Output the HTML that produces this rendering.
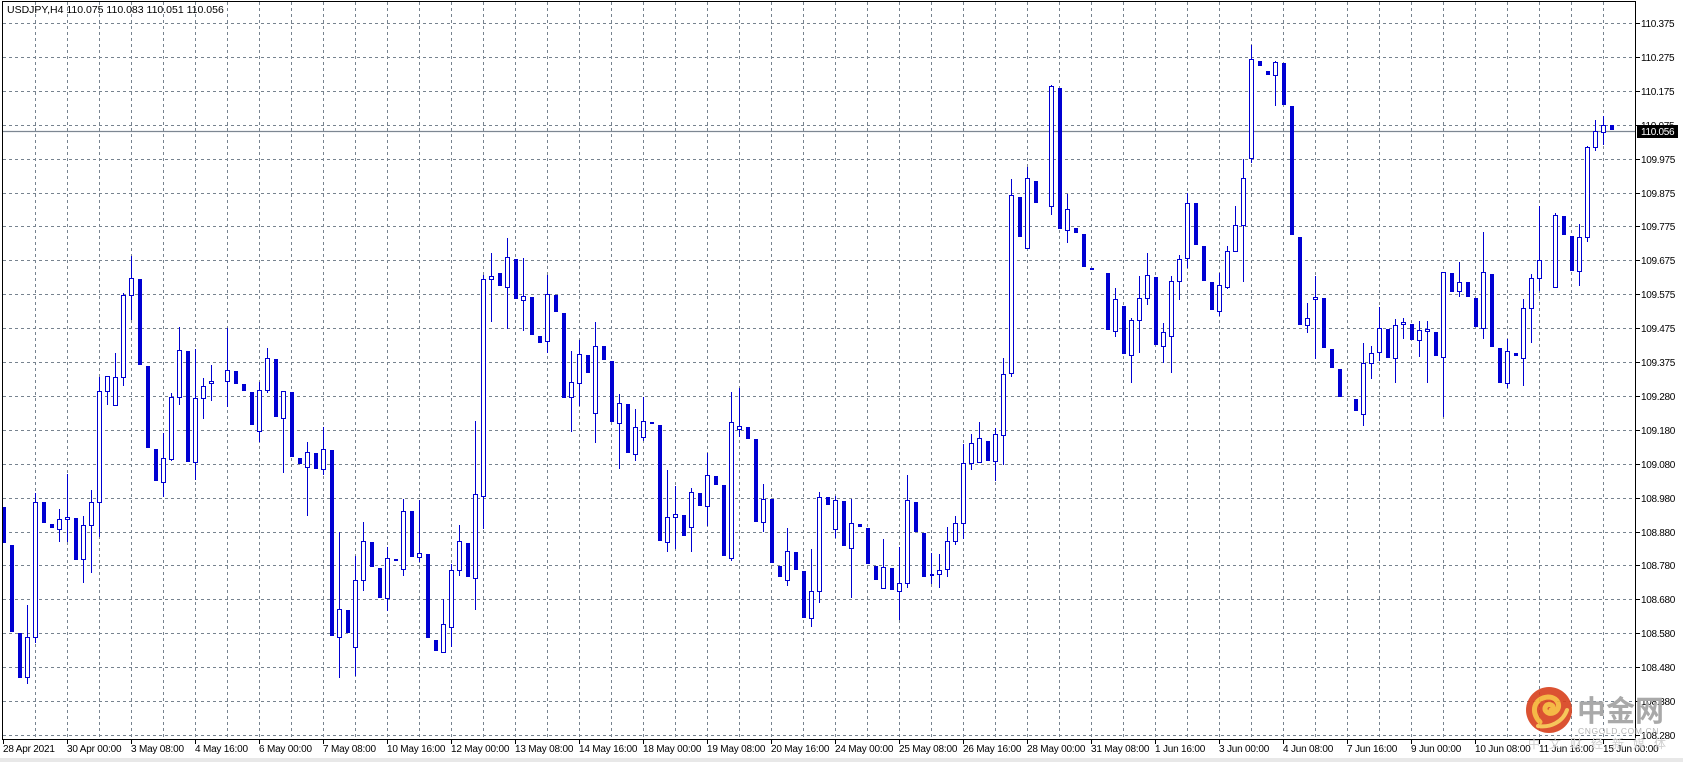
<!DOCTYPE html>
<html><head><meta charset="utf-8"><style>
html,body{margin:0;padding:0;background:#fff;width:1683px;height:762px;overflow:hidden}
svg{display:block}
text{font-family:"Liberation Sans","Noto Sans CJK SC",sans-serif}
</style></head><body>
<svg id="s" width="1683" height="762" viewBox="0 0 1683 762" xmlns="http://www.w3.org/2000/svg">
<rect width="1683" height="762" fill="#fff"/>
<g id="grid" stroke="#77838f" stroke-width="1" stroke-dasharray="3,3" fill="none"></g>
<line x1="2" y1="131.5" x2="1636" y2="131.5" stroke="#7d8792" stroke-width="1.2"/>
<g id="candles"></g>
<!-- frame -->
<line x1="2.5" y1="1" x2="2.5" y2="740" stroke="#000" stroke-width="1"/>
<line x1="2" y1="1.5" x2="1636" y2="1.5" stroke="#000" stroke-width="1"/>
<line x1="1635.5" y1="1" x2="1635.5" y2="740" stroke="#000" stroke-width="1"/>
<line x1="2" y1="739.5" x2="1636" y2="739.5" stroke="#000" stroke-width="1"/>
<g id="ticks" stroke="#000" stroke-width="1"></g>
<rect x="0" y="758" width="1683" height="4" fill="#e8e8e8"/>
<text x="7" y="13" font-size="10.5" fill="#000">USDJPY,H4  110.075 110.083 110.051 110.056</text>
<g font-size="10" fill="#000" letter-spacing="-0.3">
<text x="1641" y="27">110.375</text>
<text x="1641" y="61">110.275</text>
<text x="1641" y="95">110.175</text>
<text x="1641" y="129">110.075</text>
<text x="1641" y="163">109.975</text>
<text x="1641" y="197">109.875</text>
<text x="1641" y="230">109.775</text>
<text x="1641" y="264">109.675</text>
<text x="1641" y="298">109.575</text>
<text x="1641" y="332">109.475</text>
<text x="1641" y="366">109.375</text>
<text x="1641" y="400">109.280</text>
<text x="1641" y="434">109.180</text>
<text x="1641" y="468">109.080</text>
<text x="1641" y="502">108.980</text>
<text x="1641" y="536">108.880</text>
<text x="1641" y="569">108.780</text>
<text x="1641" y="603">108.680</text>
<text x="1641" y="637">108.580</text>
<text x="1641" y="671">108.480</text>
<text x="1641" y="705">108.380</text>
<text x="1641" y="739">108.280</text>
</g>
<rect x="1637" y="125" width="41" height="13" fill="#000"/>
<text x="1641" y="135" font-size="10" fill="#fff" letter-spacing="-0.3">110.056</text>
<g font-size="10" fill="#000" letter-spacing="-0.2">
<text x="3" y="752">28 Apr 2021</text>
<text x="67" y="752">30 Apr 00:00</text>
<text x="131" y="752">3 May 08:00</text>
<text x="195" y="752">4 May 16:00</text>
<text x="259" y="752">6 May 00:00</text>
<text x="323" y="752">7 May 08:00</text>
<text x="387" y="752">10 May 16:00</text>
<text x="451" y="752">12 May 00:00</text>
<text x="515" y="752">13 May 08:00</text>
<text x="579" y="752">14 May 16:00</text>
<text x="643" y="752">18 May 00:00</text>
<text x="707" y="752">19 May 08:00</text>
<text x="771" y="752">20 May 16:00</text>
<text x="835" y="752">24 May 00:00</text>
<text x="899" y="752">25 May 08:00</text>
<text x="963" y="752">26 May 16:00</text>
<text x="1027" y="752">28 May 00:00</text>
<text x="1091" y="752">31 May 08:00</text>
<text x="1155" y="752">1 Jun 16:00</text>
<text x="1219" y="752">3 Jun 00:00</text>
<text x="1283" y="752">4 Jun 08:00</text>
<text x="1347" y="752">7 Jun 16:00</text>
<text x="1411" y="752">9 Jun 00:00</text>
<text x="1475" y="752">10 Jun 08:00</text>
<text x="1539" y="752">11 Jun 16:00</text>
<text x="1603" y="752">15 Jun 00:00</text>
</g>
<!-- watermark -->
<g opacity="0.9">
<circle cx="1549" cy="710" r="23" fill="#d8401c"/>
<path d="M1540 722 C1530 712,1534 698,1548 697 C1560 697,1562 710,1553 713 C1547 715,1542 709,1547 705 C1552 703,1556 708,1551 710" fill="none" stroke="#f5b233" stroke-width="5" stroke-linecap="round"/>
<path d="M1538 726 C1550 728,1563 722,1567 710" fill="none" stroke="#f6c04a" stroke-width="4" stroke-linecap="round"/>
</g>
<text x="1577" y="721" font-size="29" font-weight="bold" fill="#a9a9a9" font-family="'Noto Sans CJK SC',sans-serif">中金网</text>
<text x="1578" y="734" font-size="8.5" fill="#b5b5b5" letter-spacing="0.6">CNGOLD.COM.CN</text>
<text x="1528" y="748" font-size="12" fill="#cfcfcf" letter-spacing="9" font-family="'Noto Sans CJK SC',sans-serif">中文财经新媒体</text>
</svg>
<script>
(function(){
var NS="http://www.w3.org/2000/svg";
var g=document.getElementById("grid");
function ln(p,x1,y1,x2,y2){var l=document.createElementNS(NS,"line");l.setAttribute("x1",x1);l.setAttribute("y1",y1);l.setAttribute("x2",x2);l.setAttribute("y2",y2);p.appendChild(l);return l;}
for(var k=0;k<22;k++){var y=Math.round(23+k*33.9)+0.5;ln(g,3,y,1635,y);}
for(var x=35;x<1635;x+=32){ln(g,x+0.5,2,x+0.5,739);}
var t=document.getElementById("ticks");
for(var k=0;k<22;k++){var y=Math.round(23+k*33.9)+0.5;ln(t,1636,y,1640,y);}
for(var x=3;x<=1603;x+=64){ln(t,x+0.5,740,x+0.5,744);}
var D=[[507,543],[545,632],[633,678],[677,637,605,684],[637,502,493,643],[502,523],[524,528],[529,519,509,542],[519,517,474,542],[518,560],
[559,525,516,583],[525,502,490,573],[502,391,377,537],[391,376,376,405],[405,377,353,405],[377,295,293,386],[295,278,256,320],[279,365],[366,448],[449,481],
[482,458,433,497],[459,397,393,461],[397,350,327,405],[351,462],[462,398,349,480],[398,386,378,419],[383,381,365,401],null,[381,370,328,407],[371,384],
[384,391],[392,425],[431,390,382,442],[390,358,348,393],[359,417],[418,391,391,473],[392,457],[458,464],[467,452,442,516],[453,469],
[469,449,427,475],[450,636],[637,609,532,678],[610,633],[647,580,556,676],[580,541,522,591],[542,567],[568,598],[598,558,547,611],[559,561],
[569,511,499,576],[511,557],[557,553,500,562],[554,638],[640,651],[652,624,599,653],[627,570,564,647],[570,541,525,576],[543,577],[578,494,421,610],
[496,279,275,529],[279,276,253,322],[273,286],[287,257,238,329],[259,299],[300,296,258,331],[297,335],[336,343],[341,294,275,353],[295,312],
[313,398],[397,382,351,432],[383,354,340,406],[355,373],[413,346,322,443],[346,360],[361,422],[423,403,394,469],[404,453],[454,427,409,461],
[437,421,397,441],[422,424],[425,541],[542,517,470,552],[517,514,486,549],[515,536],[527,492,488,552],[493,506],[506,475,453,526],[476,485],
[485,556],[558,422,392,561],[429,426,388,437],[427,439],[439,522],[522,499,484,532],[499,563],[566,577],[580,551,528,586],[552,570],
[571,618],[618,591,549,627],[591,497,492,603],[497,505],[529,500,496,538],[501,546],[548,523,499,598],[524,527],[528,564],[566,580],
[588,567,539,589],[568,590],[591,583,547,620],[583,500,475,588],[502,532],[533,577],[574,575,553,584],[574,570,554,588],[569,541,527,577],[541,523,516,545],
[523,463,444,539],[463,443,434,470],[462,438,422,462],[441,461],[461,434,428,481],[435,374,358,465],[373,195,179,377],[197,237],[248,178,167,248],[181,203],
null,[206,86,85,215],[88,229],[230,209,194,243],[228,233],[234,267],[268,270],null,[273,330],[331,299,288,337],
[306,354],[355,320,318,383],[320,298,276,353],[298,275,253,305],[277,345],[346,332,323,363],[336,281,276,373],[281,259,255,300],[258,203,193,268],[203,245],
[246,281],[282,310],[311,285,273,316],[287,251,246,289],[251,225,206,251],[225,178,159,282],[158,59,45,163],[61,66],[71,75],[75,62,61,106],
[63,105],[106,235],[237,325],[325,318,303,333],[299,297,276,359],[298,348],[349,368],[369,397],null,[399,411],
[414,363,343,426],[363,353,346,379],[352,328,307,361],[329,358],[358,325,319,383],[324,322,318,339],[324,340],[340,330,321,357],[331,329,321,383],[332,356],
[357,272,272,417],[273,292],[291,282,262,297],[282,297],[298,327],[328,272,232,339],[274,347],[348,383],[383,351,339,388],[353,356],
[358,308,299,386],[308,278,274,343],[278,260,206,291],null,[287,215,213,287],[216,235],[236,271],[271,237,224,286],[237,147,146,242],[147,131,120,151],
[132,125,116,145],[125,130]];
var C=document.getElementById("candles");var col="#0000d2";
for(var i=0;i<D.length;i++){var d=D[i];if(!d)continue;var cx=3+8*i;var o=d[0],c=d[1];
var h=d.length>2?d[2]:Math.min(o,c),l=d.length>2?d[3]:Math.max(o,c);
var w=ln(C,cx+0.5,h,cx+0.5,l);w.setAttribute("stroke",col);w.setAttribute("stroke-width","1");
var r=document.createElementNS(NS,"rect");var top=Math.min(o,c),ht=Math.max(Math.abs(o-c),1);
if(c<o){r.setAttribute("x",cx-1.5);r.setAttribute("y",top+0.5);r.setAttribute("width",4);r.setAttribute("height",ht);r.setAttribute("fill","#fff");r.setAttribute("stroke",col);r.setAttribute("stroke-width","1");}
else{r.setAttribute("x",cx-1);r.setAttribute("y",top);r.setAttribute("width",4);r.setAttribute("height",Math.max(ht,2));r.setAttribute("fill",col);}
C.appendChild(r);}
})();
</script>
</body></html>
